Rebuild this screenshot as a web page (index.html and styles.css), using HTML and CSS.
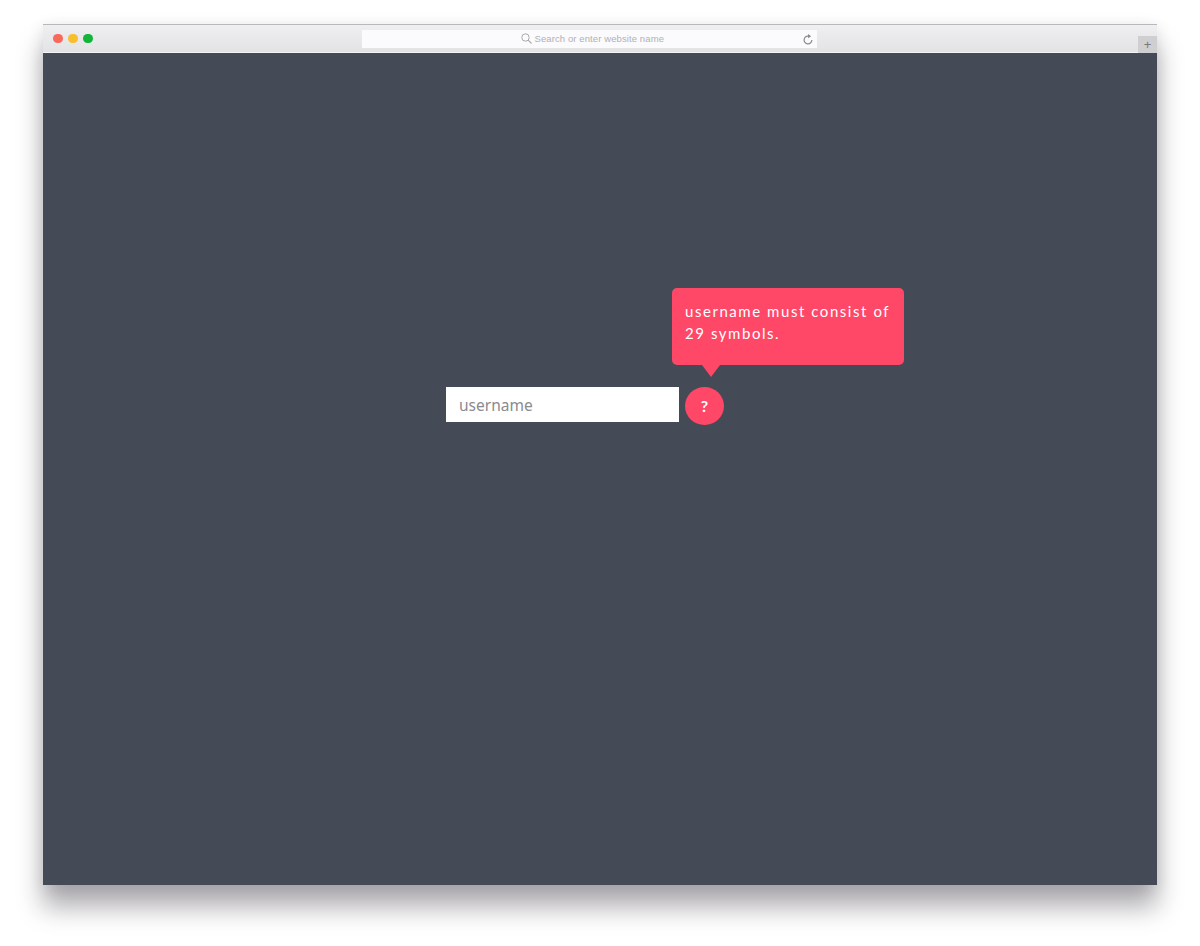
FILE: index.html
```html
<!DOCTYPE html>
<html lang="en">
<head>
    <meta charset="UTF-8">
    <meta name="viewport" content="width=device-width, initial-scale=1.0">
    <title>Username Tooltip</title>
    <link rel="stylesheet" href="styles.css">
</head>
<body>
    <div class="browser-window">
        <div class="title-bar">
            <div class="traffic-lights">
                <span class="light light-red"></span>
                <span class="light light-yellow"></span>
                <span class="light light-green"></span>
            </div>
            <div class="address-bar">
                <div class="address-label">
                    <svg class="search-icon" width="11" height="11" viewBox="0 0 11 11">
                        <circle cx="4.5" cy="4.5" r="3.7" fill="none" stroke="#a9a9ac" stroke-width="1"/>
                        <path d="M7.2 7.2 L10.5 10.5" stroke="#a9a9ac" stroke-width="1.1" fill="none"/>
                    </svg>
                    <span>Search or enter website name</span>
                </div>
                <svg class="reload-icon" width="10" height="11" viewBox="0 0 10 11">
                    <path d="M6.6 2.4 A3.9 3.9 0 1 0 8.9 6" stroke="#8b8b8e" stroke-width="1.2" fill="none"/>
                    <path d="M5 0 L8.2 2.3 L5 4.2 Z" fill="#8b8b8e"/>
                </svg>
            </div>
            <div class="new-tab">+</div>
        </div>
        <div class="stage">
            <div class="field-row">
                <input class="username-input" type="text" placeholder="username">
                <div class="help-button">?
                    <div class="tooltip">username must consist of 29 symbols.</div>
                </div>
            </div>
        </div>
    </div>
</body>
</html>
```

FILE: styles.css
```css
html, body {
    height: 100%;
}
body {
    margin: 0;
    padding: 24px 43px 0;
    box-sizing: border-box;
    background-color: #ffffff;
    font-family: "Liberation Sans", Arial, sans-serif;
}
.browser-window {
    height: 861px;
    display: flex;
    flex-direction: column;
    box-shadow: 0 22px 24px rgba(30, 25, 35, 0.36), 0 2px 14px rgba(30, 25, 35, 0.1);
}
.title-bar {
    height: 29px;
    flex-shrink: 0;
    box-sizing: border-box;
    position: relative;
    display: flex;
    align-items: center;
    background: linear-gradient(#efeef1, #e3e2e5);
    border-top: 1px solid #b9b8bc;
    border-bottom: 1px solid #f4f3f6;
}
.traffic-lights {
    display: flex;
    gap: 5.5px;
    margin-left: 10px;
}
.light {
    width: 9.5px;
    height: 9.5px;
    border-radius: 50%;
}
.light-red {
    background-color: #f8695c;
}
.light-yellow {
    background-color: #f8bf2c;
}
.light-green {
    background-color: #12b43a;
}
.address-bar {
    width: 455px;
    height: 18px;
    margin-left: 269px;
    margin-top: 1px;
    padding-right: 4px;
    box-sizing: border-box;
    position: relative;
    display: flex;
    align-items: center;
    background-color: #fbfafc;
}
.address-label {
    position: absolute;
    left: 159px;
    top: 3px;
    display: flex;
    align-items: center;
    gap: 3px;
    font-size: 9.5px;
    letter-spacing: 0.1px;
    color: #b1b1b5;
    white-space: nowrap;
}
.reload-icon {
    margin-left: auto;
}
.new-tab {
    position: absolute;
    right: 0;
    bottom: -1px;
    width: 19px;
    height: 17px;
    background-color: #cfced1;
    color: #77777a;
    font-size: 13px;
    line-height: 18px;
    text-align: center;
}
.stage {
    flex: 1;
    padding: 334px 0 0 403px;
    background-color: #444b56;
}
.field-row {
    display: flex;
    align-items: flex-start;
    gap: 6px;
}
.username-input {
    width: 233px;
    height: 35px;
    padding: 0 13px;
    box-sizing: border-box;
    border: 0;
    border-radius: 0;
    outline: none;
    background-color: #ffffff;
    font-family: "Noto Sans", sans-serif;
    font-size: 15.5px;
}
.username-input::placeholder {
    color: #8b8a90;
    opacity: 1;
}
.help-button {
    width: 39px;
    height: 38px;
    position: relative;
    flex-shrink: 0;
    border-radius: 50%;
    background-color: #ff4767;
    color: #ffffff;
    font-family: "Lato", sans-serif;
    font-size: 16px;
    font-weight: 700;
    line-height: 38px;
    text-align: center;
}
.tooltip {
    position: absolute;
    left: -13px;
    bottom: 60px;
    width: 232px;
    height: 77px;
    padding: 12px 13px 0;
    box-sizing: border-box;
    border-radius: 5px;
    background-color: #ff4767;
    color: #ffffff;
    font-family: "Lato", sans-serif;
    font-size: 15px;
    font-weight: 400;
    letter-spacing: 1.55px;
    line-height: 22px;
    text-align: left;
}
.tooltip::after {
    content: "";
    position: absolute;
    left: 30px;
    top: 100%;
    border-left: 9px solid transparent;
    border-right: 9px solid transparent;
    border-top: 12px solid #ff4767;
}
```
